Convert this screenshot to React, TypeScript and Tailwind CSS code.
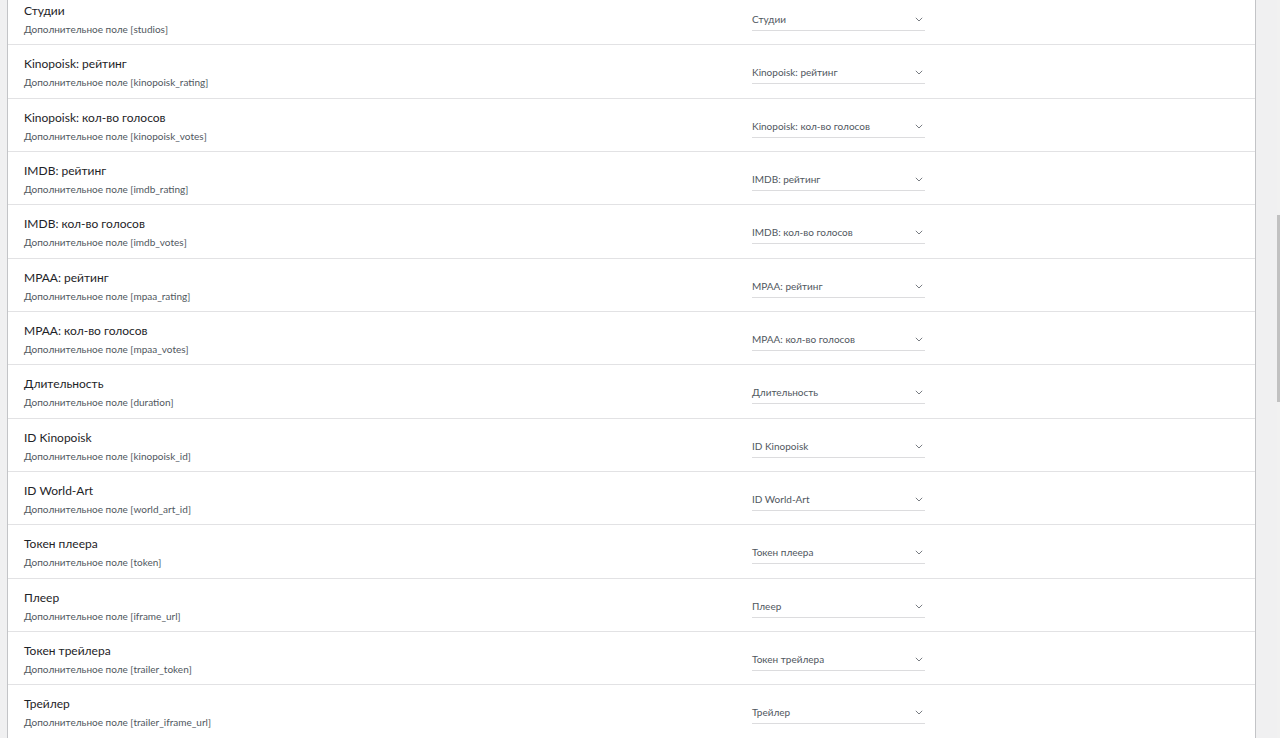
const fields = [
  { title: "Студии", key: "studios" },
  { title: "Kinopoisk: рейтинг", key: "kinopoisk_rating" },
  { title: "Kinopoisk: кол-во голосов", key: "kinopoisk_votes" },
  { title: "IMDB: рейтинг", key: "imdb_rating" },
  { title: "IMDB: кол-во голосов", key: "imdb_votes" },
  { title: "MPAA: рейтинг", key: "mpaa_rating" },
  { title: "MPAA: кол-во голосов", key: "mpaa_votes" },
  { title: "Длительность", key: "duration" },
  { title: "ID Kinopoisk", key: "kinopoisk_id" },
  { title: "ID World-Art", key: "world_art_id" },
  { title: "Токен плеера", key: "token" },
  { title: "Плеер", key: "iframe_url" },
  { title: "Токен трейлера", key: "trailer_token" },
  { title: "Трейлер", key: "trailer_iframe_url" },
];

function Chevron() {
  return (
    <svg width="8" height="5" viewBox="0 0 8 5" fill="none" className="text-[#787c82]">
      <path d="M0.8 0.8l3.2 3.2L7.2 0.8" stroke="currentColor" strokeWidth="1" />
    </svg>
  );
}

function FieldRow({ title, fieldKey }: { title: string; fieldKey: string }) {
  return (
    <div className="flex h-[53.33px] items-start border-b border-[#e2e2e4]">
      <div className="w-[744px] pl-[16px] pt-[10px]">
        <p className="text-[12px] leading-[17px] text-[#1d2327]">{title}</p>
        <p className="mt-[3px] text-[10px] leading-[15px] text-[#50575e]">
          Дополнительное поле [{fieldKey}]
        </p>
      </div>
      <div className="mt-[17px] flex h-[22px] w-[173px] items-center justify-between border-b border-[#dcdcde] pr-[2px]">
        <span className="text-[10px] text-[#50575e]">{title}</span>
        <Chevron />
      </div>
    </div>
  );
}

export default function App() {
  return (
    <div
      className="flex h-[738px] w-[1280px] overflow-hidden bg-[#f0f0f1]"
      style={{ fontFamily: 'Lato, "Noto Sans", sans-serif' }}
    >
      <div className="w-[7px] shrink-0" />
      <div className="-mt-[8px] w-[1249px] shrink-0 self-start border-x border-[#c3c4c7] bg-white">
        {fields.map((f) => (
          <FieldRow key={f.key} title={f.title} fieldKey={f.key} />
        ))}
      </div>
      <div className="flex-1" />
      <div className="w-[3px] shrink-0 bg-[#f1f1f1]">
        <div className="mt-[215px] h-[187px] w-[3px] bg-[#c1c1c1]" />
      </div>
    </div>
  );
}
